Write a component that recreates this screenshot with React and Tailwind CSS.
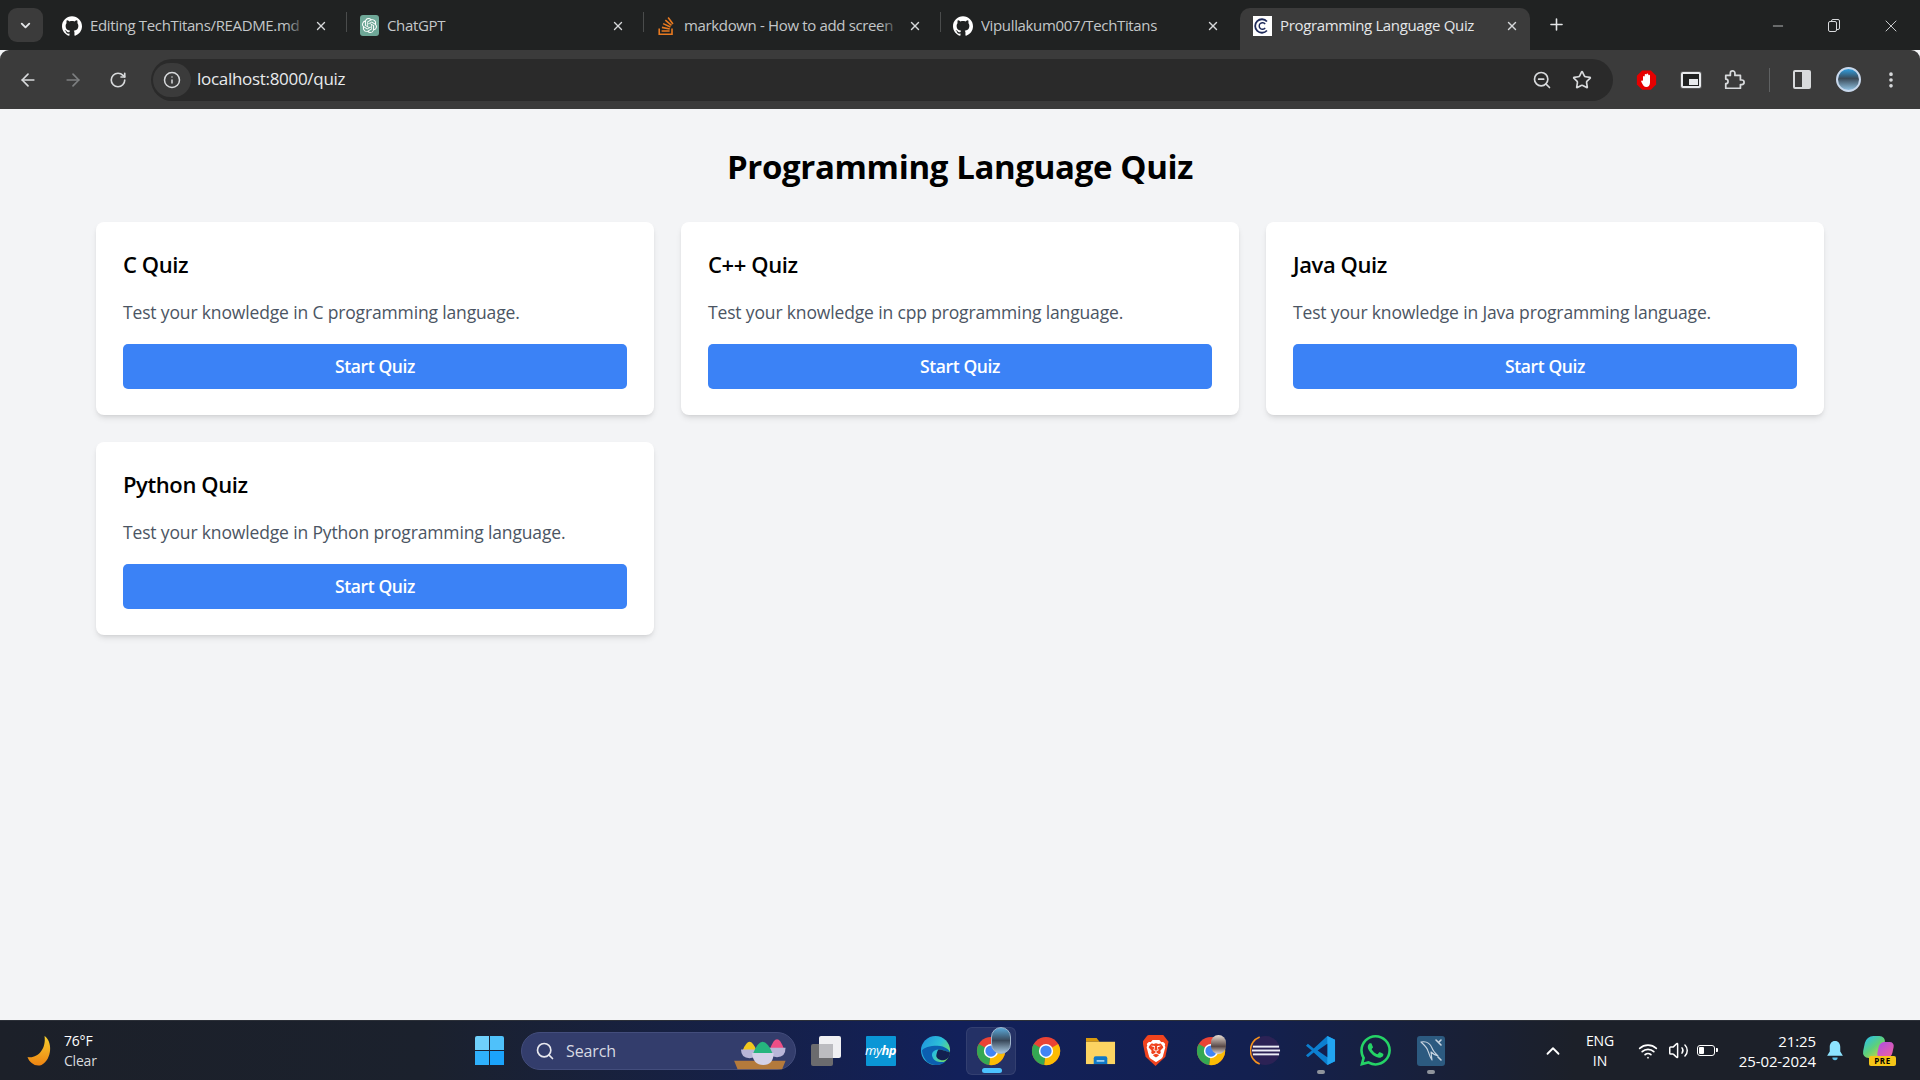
import React from "react";
import { ArrowLeft, ArrowRight, RotateCw, Info, ZoomOut, Star, Search, X, Plus, Minus, MoreVertical, ChevronDown, ChevronUp, Wifi, Volume2 } from "lucide-react";
import { SiGithub, SiOpenai, SiStackoverflow, SiBrave, SiWhatsapp } from "react-icons/si";

const quizzes = [
  { title: "C Quiz", text: "Test your knowledge in C programming language." },
  { title: "C++ Quiz", text: "Test your knowledge in cpp programming language." },
  { title: "Java Quiz", text: "Test your knowledge in Java programming language." },
  { title: "Python Quiz", text: "Test your knowledge in Python programming language." },
];

function Chrome({ badge }) {
  return (
    <div className="relative w-[30px] h-[30px]">
      <svg viewBox="0 0 32 32" className="w-[30px] h-[30px]">
        <circle cx="16" cy="16" r="15" fill="#ea4335" />
        <path d="M16 16 L29 8.5 A15 15 0 0 1 14 30.9 Z" fill="#fbbc04" />
        <path d="M16 16 L14 30.9 A15 15 0 0 1 3 8.5 Z" fill="#34a853" />
        <circle cx="16" cy="16" r="7.6" fill="#fff" />
        <circle cx="16" cy="16" r="6" fill="#4285f4" />
      </svg>
      {badge === "big" && (
        <div className="absolute -top-[9px] left-[15px] w-[20px] h-[27px] rounded-full bg-[linear-gradient(180deg,#5aa8d8,#39485a_50%,#a8c8e0)] border border-[#9fb4cc]" />
      )}
      {badge === "small" && (
        <div className="absolute -top-px left-[15px] w-[15px] h-[19px] rounded-full bg-[linear-gradient(180deg,#e8ddd4,#5a4a48_60%,#e0d8d0)]" />
      )}
    </div>
  );
}

function Tab({ icon, title, width, pr, fade, active, sep }) {
  return (
    <div className={`relative flex items-center h-[42px] mt-2 shrink-0 pb-[7px] pl-[12px] ${pr} ${width} ${active ? "bg-[#3b3b3b] rounded-t-[10px] text-[#e4e6e8]" : "text-[#c4c7c9]"}`}>
      <div className="w-5 h-5 flex items-center justify-center shrink-0">{icon}</div>
      <div className="relative ml-[8px] flex-1 overflow-hidden whitespace-nowrap text-[15px] leading-5 tracking-[-0.35px] -mt-[1px]">
        {title}
        {fade && <div className="absolute right-0 top-0 h-full w-5 bg-[linear-gradient(90deg,transparent,#202222)]" />}
      </div>
      <X size={14} strokeWidth={2.4} className="shrink-0 ml-2 -mr-[1px] text-[#d6d8da]" />
      {sep && <div className="absolute right-0 top-[4px] w-px h-[20px] bg-[#4a4c4c]" />}
    </div>
  );
}

function TaskIcon({ children, active, dot }) {
  return (
    <div className={`relative w-[50px] h-[48px] mx-[2.5px] flex items-center justify-center rounded-md ${active ? "bg-[#ffffff14] border border-[#ffffff12]" : ""}`}>
      {children}
      {active && <div className="absolute bottom-[1px] left-[15px] w-5 h-[5px] rounded-full bg-[#4cc2ff]" />}
      {dot && <div className="absolute bottom-[1px] left-[21px] w-2 h-[4px] rounded-full bg-[#8f949c]" />}
    </div>
  );
}

export default function App() {
  return (
    <div className="w-[1920px] h-[1080px] flex flex-col overflow-hidden bg-[#f3f4f6] font-['Open_Sans','Noto_Sans',sans-serif]">
      {/* tab strip */}
      <div className="h-[50px] bg-[#202222] flex items-start shrink-0">
        <div className="ml-[8px] mt-2 w-[35px] h-[34px] rounded-[9px] bg-[#3b3b3b] flex items-center justify-center text-[#e4e6e8]">
          <ChevronDown size={15} strokeWidth={3} />
        </div>
        <div className="flex ml-[7px]">
          <Tab width="w-[297px]" pr="pr-[20px]" title="Editing TechTitans/README.md" fade sep icon={<SiGithub size={20} className="text-white" />} />
          <Tab width="w-[297px]" pr="pr-[20px]" title="ChatGPT" sep icon={<div className="w-[19px] h-[21px] rounded-[3px] bg-[#6fa898] flex items-center justify-center"><SiOpenai size={15} className="text-white" /></div>} />
          <Tab width="w-[297px]" pr="pr-[20px]" title="markdown - How to add screen" fade sep icon={<SiStackoverflow size={18} className="text-[#e87a20]" />} />
          <Tab width="w-[299px]" pr="pr-[21px]" title="Vipullakum007/TechTitans" icon={<SiGithub size={20} className="text-white" />} />
          <Tab width="w-[290px]" pr="pr-[12px]" active title="Programming Language Quiz" icon={
            <div className="w-[19px] h-[20px] bg-white flex items-center justify-center">
              <svg viewBox="0 0 20 20" className="w-[18px] h-[18px]" fill="none" stroke="#1e2a5a">
                <path d="M15.5 5 A7.5 7.5 0 1 0 15.5 15" strokeWidth="2" />
                <path d="M13.5 8 A3.6 3.6 0 1 0 13.5 12" strokeWidth="1.6" />
              </svg>
            </div>
          } />
        </div>
        <div className="ml-[17px] mt-[15px] text-[#e4e6e8]"><Plus size={19} strokeWidth={2} /></div>
        <div className="ml-auto flex items-center mt-[16px] text-[#d8dadc]">
          <Minus size={16} strokeWidth={1.2} />
          <div className="ml-[41px] relative w-[16px] h-[16px]">
            <div className="absolute left-[4px] top-[1px] w-[9px] h-[11px] border border-[#d8dadc] rounded-[2px]" />
            <div className="absolute left-[1px] top-[3px] w-[9px] h-[11px] border border-[#d8dadc] rounded-[2px] bg-[#202222]" />
          </div>
          <X size={20} strokeWidth={1.1} className="ml-[38px] mr-[19px]" />
        </div>
      </div>

      {/* toolbar */}
      <div className="h-[59px] bg-[#3b3b3b] rounded-t-[9px] flex items-center shrink-0 text-[#d8dadc]">
        <ArrowLeft size={20} strokeWidth={2} className="ml-[18px]" />
        <ArrowRight size={20} strokeWidth={2} className="ml-[25px] text-[#7d7f80]" />
        <RotateCw size={18} strokeWidth={2.2} className="ml-[26px]" />
        <div className="ml-[24px] w-[1462px] h-[42px] rounded-full bg-[#2a2a2a] flex items-center pl-[2px] pr-[21px]">
          <div className="w-[38px] h-[34px] rounded-full bg-[#3b3b3b] flex items-center justify-center">
            <Info size={18} strokeWidth={2} />
          </div>
          <div className="ml-[6px] text-[17px] tracking-[-0.3px] text-[#e8eaed] -mt-[1px]">localhost:8000/quiz</div>
          <ZoomOut size={20} strokeWidth={2} className="ml-auto" />
          <Star size={20} strokeWidth={2} className="ml-[20px]" />
        </div>
        <svg viewBox="0 0 24 24" className="ml-[23px] w-[21px] h-[22px]">
          <path d="M7 1h10l6 6v10l-6 6H7l-6-6V7z" fill="#e60000" />
          <path d="M8 13V8.5a1 1 0 0 1 2 0V6a1 1 0 0 1 2 0v-.5a1 1 0 0 1 2 0V7a1 1 0 0 1 2 0v8c0 3-2 5-4 5-3 0-4-2-6-6-.5-1 1-2 2-1z" fill="#fff" />
        </svg>
        <div className="ml-[24px] w-[20px] h-[16px] border-2 border-[#e8eaed] bg-[#202222] rounded-[2px] flex items-end justify-end p-[1px] shadow-[0_0_0_1px_#555]">
          <div className="w-[9px] h-[6px] bg-[#e8eaed]" />
        </div>
        <svg viewBox="0 0 24 24" className="ml-[22px] w-[22px] h-[22px]" fill="none" stroke="#d8dadc" strokeWidth="1.9" strokeLinejoin="round">
          <path d="M3 7h5V4.5a2.5 2.5 0 0 1 5 0V7h6v5h1.5a2.5 2.5 0 0 1 0 5H19v4H3v-5a2.5 2.5 0 0 0 0-5z" />
        </svg>
        <div className="ml-[24px] w-px h-[24px] bg-[#5f6162]" />
        <div className="ml-[23px] w-[18px] h-[19px] border-2 border-[#d8dadc] rounded-[2px] flex justify-end">
          <div className="w-[7px] h-full bg-[#d8dadc]" />
        </div>
        <div className="ml-[25px] w-[25px] h-[25px] rounded-full border-2 border-[#c8d8ec] bg-[linear-gradient(180deg,#2f9ee0,#3a4a58_45%,#8fc0e0)]" />
        <MoreVertical size={20} strokeWidth={2.4} className="ml-[20px]" />
      </div>

      {/* page */}
      <div className="flex-1 bg-[#f3f4f6] px-[96px] pt-[34px]">
        <h1 className="text-center text-[33px] leading-[48px] font-bold text-black tracking-[-0.35px]">Programming Language Quiz</h1>
        <div className="grid grid-cols-3 gap-[27px] mt-[31px]">
          {quizzes.map((q) => (
            <div key={q.title} className="bg-white rounded-[8px] shadow-md p-[27px] h-[193px]">
              <h2 className="text-[22px] leading-[30px] font-semibold text-black tracking-[-0.4px]">{q.title}</h2>
              <p className="mt-[20px] text-[17.5px] leading-[27px] text-[#4b5563] tracking-[-0.15px]">{q.text}</p>
              <button className="mt-[18px] w-full h-[45px] rounded-[5px] bg-[#3b82f6] text-white text-[17.5px] font-semibold tracking-[-0.4px]">Start Quiz</button>
            </div>
          ))}
        </div>
      </div>

      {/* taskbar */}
      <div className="h-[60px] shrink-0 border-t border-[#2c3038] flex items-center text-white bg-[linear-gradient(90deg,#1c2029_0%,#1b212d_22%,#12205a_50%,#132050_65%,#1c2029_82%,#1c2029_100%)]">
        <svg viewBox="0 0 24 32" className="ml-[26px] w-[27px] h-[32px]">
          <defs>
            <linearGradient id="moon" x1="0" y1="0" x2="0" y2="1">
              <stop offset="0" stopColor="#f7cf2e" />
              <stop offset="1" stopColor="#ee8412" />
            </linearGradient>
          </defs>
          <path d="M17 1 C25 6 25 24 14 30 C8 32 2 28 0 22 C10 24 19 14 17 1Z" fill="url(#moon)" />
        </svg>
        <div className="ml-[11px] w-[60px] text-[14px] leading-[20px] tracking-[-0.2px]">
          <div>76°F</div>
          <div className="text-[#d8dade]">Clear</div>
        </div>
        <div className="ml-[351px] w-[29px] h-[29px] grid grid-cols-2 gap-[1px] shrink-0">
          <div className="bg-[#6fd0fb] rounded-tl-[2px]" />
          <div className="bg-[#4fc1fa] rounded-tr-[2px]" />
          <div className="bg-[#2fb0fb]" />
          <div className="bg-[#1ba3fb]" />
        </div>
        <div className="ml-[17px] w-[275px] h-[38px] rounded-full bg-[#333d6c] border border-[#434d7c] flex items-center pl-[13px] relative shrink-0">
          <Search size={20} strokeWidth={2} className="text-[#e8e8ee]" />
          <span className="ml-[11px] text-[16px] text-[#d8dae2] tracking-[-0.1px]">Search</span>
          <svg viewBox="0 0 66 42" className="absolute right-[4px] top-[2px] w-[64px] h-[36px]">
            <path d="M4 30h60l-4 10H8z" fill="#b47a3c" />
            <path d="M14 18 Q22 -2 30 18z" fill="#f2c81e" />
            <path d="M12 17h20q0 10-10 10t-10-10z" fill="#b9b6d8" />
            <path d="M46 16 Q54 -6 62 16z" fill="#ee4f86" />
            <path d="M44 15h20q0 11-10 11t-10-11z" fill="#b9b6d8" />
            <path d="M26 22 Q37 -6 49 22z" fill="#26b57e" />
            <path d="M25 21h25q0 14-12 14t-13-14z" fill="#d4d2e8" />
          </svg>
        </div>
        <div className="ml-[2px] flex items-center shrink-0">
          <TaskIcon>
            <div className="relative w-[32px] h-[30px]">
              <div className="absolute right-[1px] top-0 w-[22px] h-[22px] rounded-[2px] bg-[#f0f0f2]" />
              <div className="absolute left-[1px] bottom-0 w-[22px] h-[22px] rounded-[2px] bg-[#6b6b6e]" />
              <div className="absolute left-[9px] top-[8px] w-[14px] h-[14px] bg-[#bcbcc0]" />
            </div>
          </TaskIcon>
          <TaskIcon>
            <div className="w-[30px] h-[30px] bg-[#0a96d6] flex items-center justify-center text-[13px] italic text-white tracking-[-0.5px] rounded-[1px]">my<b>hp</b></div>
          </TaskIcon>
          <TaskIcon>
            <svg viewBox="0 0 32 32" className="w-[31px] h-[31px]">
              <defs>
                <linearGradient id="edge" x1="0" y1="0" x2="1" y2="0.6">
                  <stop offset="0" stopColor="#1e8fe0" />
                  <stop offset="0.6" stopColor="#2cc0d8" />
                  <stop offset="1" stopColor="#6fdc6c" />
                </linearGradient>
              </defs>
              <circle cx="16" cy="16" r="15" fill="url(#edge)" />
              <path d="M2 16 C3 26 10 31 16 31 C20 31 24 30 27 27 C22 29 15 28 13 23 C11 19 14 15 19 15 C24 15 30 18 31 18 C31 16 26 11 18 11 C10 11 4 13 2 16Z" fill="#0c5fb0" />
              <path d="M19 15 C24 15 30 18 31 18 C31 22 28 26 24 26 C19 26 16 23 17 20 C17.5 18 18 16 19 15Z" fill="#132050" />
            </svg>
          </TaskIcon>
          <TaskIcon active><Chrome badge="big" /></TaskIcon>
          <TaskIcon><Chrome /></TaskIcon>
          <TaskIcon>
            <svg viewBox="0 0 32 32" className="w-[31px] h-[31px]">
              <path d="M1 3h11l3 4h-14z" fill="#d99a0e" />
              <rect x="1" y="7" width="30" height="23" fill="#fcd462" />
              <path d="M9 24a2 2 0 0 1 2-2h10a2 2 0 0 1 2 2v6H9z" fill="#0f78c8" />
              <rect x="12" y="26" width="8" height="1.5" fill="#bfe2f8" />
            </svg>
          </TaskIcon>
          <TaskIcon>
            <div className="relative w-[26px] h-[31px] bg-[#f0431e] rounded-[6px] flex items-center justify-center [clip-path:polygon(20%_0,80%_0,100%_22%,88%_70%,50%_100%,12%_70%,0_22%)]">
              <SiBrave size={22} className="text-white" />
            </div>
          </TaskIcon>
          <TaskIcon><Chrome badge="small" /></TaskIcon>
          <TaskIcon>
            <svg viewBox="0 0 32 32" className="w-[31px] h-[31px]">
              <circle cx="16" cy="16" r="15" fill="#2c2255" />
              <path d="M10 2 A15 15 0 0 0 10 30" fill="none" stroke="#f7941e" strokeWidth="1.6" />
              <rect x="3" y="11" width="27" height="2" fill="#eeeef6" />
              <rect x="2" y="15" width="29" height="2" fill="#eeeef6" />
              <rect x="3" y="19" width="27" height="2" fill="#eeeef6" />
            </svg>
          </TaskIcon>
          <TaskIcon dot>
            <svg viewBox="0 0 32 32" className="w-[31px] h-[31px]">
              <path d="M23 1 L31 5 V27 L23 31 L9 18 L3 23 L1 21 L7 16 L1 11 L3 9 L9 14Z" fill="#0c7fd0" />
              <path d="M23 1 L31 5 V27 L23 31Z" fill="#22a5f1" />
              <path d="M23 9 L13 16 L23 23Z" fill="#132050" />
            </svg>
          </TaskIcon>
          <TaskIcon><SiWhatsapp size={31} className="text-[#25d366]" /></TaskIcon>
          <TaskIcon dot>
            <div className="w-[28px] h-[30px] rounded-[3px] bg-[#2c5a80] flex items-center justify-center">
              <svg viewBox="0 0 28 30" className="w-[28px] h-[30px]" fill="none" stroke="#c8d4e0" strokeWidth="1.1" strokeLinecap="round" strokeLinejoin="round">
                <path d="M4 6c5-1 9 1 11 6 1 3 3 5 6 8-3-1-5-2-7-4l1 8c-2-3-3-6-4-9-1-4-4-6-7-9z" />
                <path d="M19 4l5 5M24 4l-2 2M21 21l3 3" strokeWidth="1.6" />
              </svg>
            </div>
          </TaskIcon>
        </div>

        <ChevronUp size={22} strokeWidth={2} className="ml-[84px] shrink-0" />
        <div className="ml-[12px] w-[48px] text-center text-[14px] leading-[20px] tracking-[-0.1px] shrink-0">
          <div>ENG</div>
          <div>IN</div>
        </div>
        <Wifi size={20} strokeWidth={2} className="ml-[14px] shrink-0" />
        <Volume2 size={21} strokeWidth={1.7} className="ml-[10px] shrink-0" />
        <div className="ml-[8px] w-[18px] h-[11px] border-[1.5px] border-white rounded-[3px] p-[1px] shrink-0 relative">
          <div className="w-[5px] h-full bg-white rounded-[1px]" />
          <div className="absolute -right-[3.5px] top-[2px] w-[2px] h-[4px] bg-white rounded-r-[1px]" />
        </div>
        <div className="ml-auto text-right text-[15px] leading-[20px] tracking-[-0.1px] shrink-0">
          <div>21:25</div>
          <div>25-02-2024</div>
        </div>
        <svg viewBox="0 0 20 24" className="ml-[10px] w-[18px] h-[21px] shrink-0">
          <path d="M10 1c4 0 6 3 6 7v5l3 5H1l3-5V8c0-4 2-7 6-7z" fill="#8de4ff" />
          <path d="M7 20a3 3 0 0 0 6 0z" fill="#5cc0e8" />
        </svg>
        <div className="ml-[20px] mr-[26px] relative w-[30px] h-[30px] shrink-0">
          <div className="absolute left-0 top-0 w-[20px] h-[22px] rounded-[7px] bg-[linear-gradient(135deg,#2ac0e8,#5ed07a,#d8d83a)] -skew-x-12" />
          <div className="absolute right-[1px] top-[6px] w-[15px] h-[16px] rounded-[5px] bg-[linear-gradient(135deg,#b050e0,#f060a0)] -skew-x-12" />
          <div className="absolute left-[5px] -right-[2px] bottom-0 h-[10px] rounded-[2px] bg-[#f5c518] text-[8px] leading-[10px] font-bold text-black text-center tracking-[0.5px]">PRE</div>
        </div>
      </div>
    </div>
  );
}
